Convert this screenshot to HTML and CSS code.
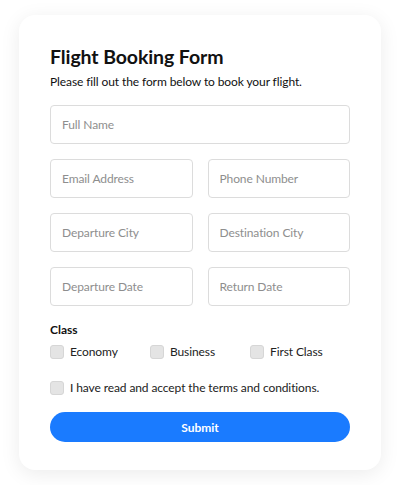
FILE: index.html
```html
<!DOCTYPE html>
<html lang="en">
<head>
	<meta charset="UTF-8">
	<meta name="viewport" content="width=device-width, initial-scale=1.0">
	<title>Flight Booking Form</title>
	<link rel="stylesheet" href="styles.css">
</head>
<body>
	<div class="card">
		<h1>Flight Booking Form</h1>
		<p class="intro">Please fill out the form below to book your flight.</p>
		<form class="form">
			<input class="field" type="text" placeholder="Full Name">
			<div class="row">
				<input class="field" type="email" placeholder="Email Address">
				<input class="field" type="tel" placeholder="Phone Number">
			</div>
			<div class="row">
				<input class="field" type="text" placeholder="Departure City">
				<input class="field" type="text" placeholder="Destination City">
			</div>
			<div class="row">
				<input class="field" type="text" placeholder="Departure Date">
				<input class="field" type="text" placeholder="Return Date">
			</div>
			<div class="group">
				<div class="group-label">Class</div>
				<div class="options">
					<label class="check"><span class="box"></span>Economy</label>
					<label class="check"><span class="box"></span>Business</label>
					<label class="check"><span class="box"></span>First Class</label>
				</div>
			</div>
			<label class="check terms"><span class="box"></span>I have read and accept the terms and conditions.</label>
			<button class="submit" type="button">Submit</button>
		</form>
	</div>
</body>
</html>
```

FILE: styles.css
```css
body {
	font-family: Lato, "Noto Sans", sans-serif;
	margin: 0;
	padding: 15px 19px;
	background: #ffffff;
	color: #111;
}
.card {
	background: #fff;
	border-radius: 16px;
	box-shadow: 0 4px 20px rgba(0, 0, 0, 0.08);
	padding: 30px 31px 30px 31px;
	box-sizing: border-box;
	width: 362px;
	height: 455px;
}
.card h1 {
	font-size: 19.5px;
	letter-spacing: -0.1px;
	font-weight: 700;
	margin: 0;
	line-height: 24px;
}
.intro {
	font-size: 12px;
	letter-spacing: -0.1px;
	margin: 4px 0 0;
	line-height: 18px;
}
.form {
	margin-top: 14px;
	display: flex;
	flex-direction: column;
	gap: 15px;
}
.row {
	display: grid;
	grid-template-columns: 1fr 1fr;
	gap: 15px;
}
.field {
	box-sizing: border-box;
	width: 100%;
	height: 39px;
	border: 1px solid #dcdcdc;
	border-radius: 4px;
	padding: 0 11px;
	font-family: inherit;
	font-size: 12px;
	letter-spacing: -0.1px;
	color: #333;
	outline: none;
}
.field::placeholder {
	color: #8e8e8e;
}
.group {
	margin-top: 1px;
}
.group-label {
	font-size: 12px;
	font-weight: 700;
	line-height: 16px;
}
.options {
	display: flex;
	margin-top: 6px;
}
.options .check {
	width: 100px;
}
.check {
	display: flex;
	align-items: center;
	font-size: 12px;
	letter-spacing: -0.1px;
	line-height: 16px;
	color: #222;
}
.box {
	width: 12px;
	height: 12px;
	border: 1px solid #d6d6d6;
	border-radius: 3px;
	background: #e4e4e4;
	margin-right: 6px;
	flex: none;
}
.terms {
	margin-top: 5px;
}
.submit {
	margin-top: 1px;
	height: 30px;
	border: none;
	border-radius: 15px;
	background: #1a7bff;
	color: #fff;
	font-family: inherit;
	font-size: 12px;
	font-weight: 700;
	cursor: pointer;
}
```
